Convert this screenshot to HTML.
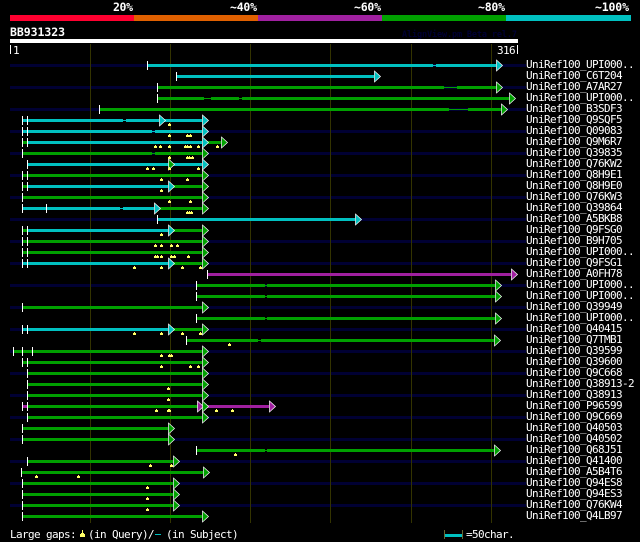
<!DOCTYPE html>
<html><head><meta charset="utf-8"><style>
html,body{margin:0;padding:0;background:#000;width:640px;height:542px;overflow:hidden}
svg{display:block}
text{font-family:"DejaVu Sans Mono","Liberation Mono",monospace;fill:#fff;white-space:pre}
.l text{font-size:11px;letter-spacing:-.62px}
.b text{font-size:11.5px;font-weight:bold}
</style></head><body>
<svg width="640" height="542" viewBox="0 0 640 542" xmlns="http://www.w3.org/2000/svg">
<rect x="10" y="15" width="124" height="6" fill="#ff0030"/>
<rect x="134" y="15" width="124" height="6" fill="#e06000"/>
<rect x="258" y="15" width="124" height="6" fill="#a020a0"/>
<rect x="382" y="15" width="124" height="6" fill="#00a000"/>
<rect x="506" y="15" width="125" height="6" fill="#00c0c0"/>
<rect x="10" y="39" width="508" height="4" fill="#fff"/>
<g class="b">
<text x="113" y="11" textLength="20">20%</text>
<text x="230" y="11" textLength="27">~40%</text>
<text x="354" y="11" textLength="27">~60%</text>
<text x="478" y="11" textLength="27">~80%</text>
<text x="595" y="11" textLength="34">~100%</text>
<text x="10" y="36" textLength="55">BB931323</text>
</g>
<text x="402" y="37" font-size="8.5" textLength="115" style="fill:#000033;font-weight:bold">AlignView.pm Beta rel.7</text>
<!-- navy alternate rows -->
<path stroke="#000033" stroke-width="3" fill="none" d="M10 65.5H526M10 87.5H526M10 109.5H526M10 131.5H526M10 153.5H526M10 175.5H526M10 197.5H526M10 219.5H526M10 241.5H526M10 263.5H526M10 285.5H526M10 307.5H526M10 329.5H526M10 351.5H526M10 373.5H526M10 395.5H526M10 417.5H526M10 439.5H526M10 461.5H526M10 483.5H526M10 505.5H526"/>
<!-- grid -->
<path stroke="#333300" stroke-width="1" fill="none" d="M90.5 44V523M170.5 44V523M250.5 44V523M330.5 44V523M411.5 44V523M491.5 44V523"/>
<!-- thin gap lines -->
<path stroke="#00c0c0" stroke-width="1" fill="none" d="M433 65.5H436M123 120.5H126M152 131.5H155M120 208.5H123"/>
<path stroke="#00a000" stroke-width="1" fill="none" d="M444 87.5H457M204 98.5H211M239 98.5H242M449 109.5H468M152 153.5H155M265 285.5H267M265 296.5H267M265 318.5H267M258 340.5H261M265 450.5H267"/>
<!-- green bars -->
<path stroke="#00a000" stroke-width="3" fill="none" d="M158 87.5H444M457 87.5H496M158 98.5H204M211 98.5H239M242 98.5H509M100 109.5H449M468 109.5H501M23 142.5H27M207 142.5H221M23 153.5H152M155 153.5H202M23 175.5H202M23 186.5H27M173 186.5H202M23 197.5H202M159 208.5H202M23 230.5H27M173 230.5H202M23 241.5H202M23 252.5H202M173 263.5H202M197 285.5H265M267 285.5H495M197 296.5H265M267 296.5H495M23 307.5H202M197 318.5H265M267 318.5H495M173 329.5H202M187 340.5H258M261 340.5H494M14 351.5H202M23 362.5H202M28 373.5H202M28 384.5H202M28 395.5H202M27 406.5H202M28 417.5H202M23 428.5H168M23 439.5H168M197 450.5H265M267 450.5H494M28 461.5H173M22 472.5H203M23 483.5H173M23 494.5H173M23 505.5H173M23 516.5H202"/>
<!-- cyan bars -->
<path stroke="#00c0c0" stroke-width="3" fill="none" d="M148 65.5H433M436 65.5H496M177 76.5H374M23 120.5H123M126 120.5H159M164 120.5H202M23 131.5H152M155 131.5H202M27 142.5H202M28 164.5H202M27 186.5H168M23 208.5H120M123 208.5H154M158 219.5H355M27 230.5H168M23 263.5H168M23 329.5H168"/>
<!-- purple bars -->
<path stroke="#a020a0" stroke-width="3" fill="none" d="M208 274.5H511M23 406.5H27M207 406.5H269"/>
<!-- ticks -->
<path stroke="#fff" stroke-width="1" fill="none" d="M10.5 45V54M517.5 45V54M147.5 61V70M176.5 72V81M157.5 83V92M157.5 94V103M99.5 105V114M22.5 116V125M27.5 116V125M22.5 127V136M27.5 127V136M22.5 138V147M27.5 138V147M22.5 149V158M27.5 160V169M22.5 171V180M27.5 171V180M22.5 182V191M27.5 182V191M22.5 193V202M22.5 204V213M46.5 204V213M157.5 215V224M22.5 226V235M27.5 226V235M22.5 237V246M27.5 237V246M22.5 248V257M27.5 248V257M22.5 259V268M27.5 259V268M207.5 270V279M196.5 281V290M196.5 292V301M22.5 303V312M196.5 314V323M22.5 325V334M27.5 325V334M186.5 336V345M13.5 347V356M22.5 347V356M32.5 347V356M22.5 358V367M27.5 358V367M27.5 369V378M27.5 380V389M27.5 391V400M22.5 402V411M27.5 402V411M27.5 413V422M22.5 424V433M22.5 435V444M196.5 446V455M27.5 457V466M21.5 468V477M22.5 479V488M22.5 490V499M22.5 501V510M22.5 512V521"/>
<!-- purple arrows (behind) -->
<path stroke="#fff" stroke-width=".7" fill="#a020a0" d="M511.5 269v11l6-5.5zM197.5 401v11l6-5.5zM269.5 401v11l6-5.5z"/>
<!-- green arrows -->
<path stroke="#fff" stroke-width=".7" fill="#00a000" d="M168.5 159v11l6-5.5zM496.5 82v11l6-5.5zM509.5 93v11l6-5.5zM501.5 104v11l6-5.5zM221.5 137v11l6-5.5zM202.5 148v11l6-5.5zM202.5 170v11l6-5.5zM202.5 181v11l6-5.5zM202.5 192v11l6-5.5zM202.5 203v11l6-5.5zM202.5 225v11l6-5.5zM202.5 236v11l6-5.5zM202.5 247v11l6-5.5zM202.5 258v11l6-5.5zM495.5 280v11l6-5.5zM495.5 291v11l6-5.5zM202.5 302v11l6-5.5zM495.5 313v11l6-5.5zM202.5 324v11l6-5.5zM494.5 335v11l6-5.5zM202.5 346v11l6-5.5zM202.5 357v11l6-5.5zM202.5 368v11l6-5.5zM202.5 379v11l6-5.5zM202.5 390v11l6-5.5zM202.5 401v11l6-5.5zM202.5 412v11l6-5.5zM168.5 423v11l6-5.5zM168.5 434v11l6-5.5zM494.5 445v11l6-5.5zM173.5 456v11l6-5.5zM203.5 467v11l6-5.5zM173.5 478v11l6-5.5zM173.5 489v11l6-5.5zM173.5 500v11l6-5.5zM202.5 511v11l6-5.5z"/>
<!-- cyan arrows -->
<path stroke="#fff" stroke-width=".7" fill="#00c0c0" d="M496.5 60v11l6-5.5zM374.5 71v11l6-5.5zM159.5 115v11l6-5.5zM202.5 115v11l6-5.5zM202.5 126v11l6-5.5zM202.5 137v11l6-5.5zM202.5 159v11l6-5.5zM168.5 181v11l6-5.5zM154.5 203v11l6-5.5zM355.5 214v11l6-5.5zM168.5 225v11l6-5.5zM168.5 258v11l6-5.5zM168.5 324v11l6-5.5z"/>
<!-- gap markers -->
<path fill="#ffff66" d="M169 123h1v1h1v2h-3v-2h1zM169 134h1v1h1v2h-3v-2h1zM187 134h1v1h1v2h-3v-2h1zM190 134h1v1h1v2h-3v-2h1zM155 145h1v1h1v2h-3v-2h1zM160 145h1v1h1v2h-3v-2h1zM169 145h1v1h1v2h-3v-2h1zM185 145h1v1h1v2h-3v-2h1zM187 145h1v1h1v2h-3v-2h1zM190 145h1v1h1v2h-3v-2h1zM198 145h1v1h1v2h-3v-2h1zM217 145h1v1h1v2h-3v-2h1zM169 156h1v1h1v2h-3v-2h1zM187 156h1v1h1v2h-3v-2h1zM189 156h1v1h1v2h-3v-2h1zM192 156h1v1h1v2h-3v-2h1zM147 167h1v1h1v2h-3v-2h1zM153 167h1v1h1v2h-3v-2h1zM169 167h1v1h1v2h-3v-2h1zM198 167h1v1h1v2h-3v-2h1zM161 178h1v1h1v2h-3v-2h1zM187 178h1v1h1v2h-3v-2h1zM161 189h1v1h1v2h-3v-2h1zM169 200h1v1h1v2h-3v-2h1zM190 200h1v1h1v2h-3v-2h1zM187 211h1v1h1v2h-3v-2h1zM189 211h1v1h1v2h-3v-2h1zM191 211h1v1h1v2h-3v-2h1zM161 233h1v1h1v2h-3v-2h1zM155 244h1v1h1v2h-3v-2h1zM161 244h1v1h1v2h-3v-2h1zM171 244h1v1h1v2h-3v-2h1zM177 244h1v1h1v2h-3v-2h1zM155 255h1v1h1v2h-3v-2h1zM157 255h1v1h1v2h-3v-2h1zM161 255h1v1h1v2h-3v-2h1zM171 255h1v1h1v2h-3v-2h1zM174 255h1v1h1v2h-3v-2h1zM188 255h1v1h1v2h-3v-2h1zM134 266h1v1h1v2h-3v-2h1zM161 266h1v1h1v2h-3v-2h1zM182 266h1v1h1v2h-3v-2h1zM200 266h1v1h1v2h-3v-2h1zM134 332h1v1h1v2h-3v-2h1zM161 332h1v1h1v2h-3v-2h1zM182 332h1v1h1v2h-3v-2h1zM200 332h1v1h1v2h-3v-2h1zM229 343h1v1h1v2h-3v-2h1zM161 354h1v1h1v2h-3v-2h1zM169 354h1v1h1v2h-3v-2h1zM171 354h1v1h1v2h-3v-2h1zM161 365h1v1h1v2h-3v-2h1zM190 365h1v1h1v2h-3v-2h1zM198 365h1v1h1v2h-3v-2h1zM168 387h1v1h1v2h-3v-2h1zM168 398h1v1h1v2h-3v-2h1zM156 409h1v1h1v2h-3v-2h1zM168 409h1v1h1v2h-3v-2h1zM169 409h1v1h1v2h-3v-2h1zM216 409h1v1h1v2h-3v-2h1zM232 409h1v1h1v2h-3v-2h1zM235 453h1v1h1v2h-3v-2h1zM150 464h1v1h1v2h-3v-2h1zM171 464h1v1h1v2h-3v-2h1zM36 475h1v1h1v2h-3v-2h1zM78 475h1v1h1v2h-3v-2h1zM147 486h1v1h1v2h-3v-2h1zM147 497h1v1h1v2h-3v-2h1zM147 508h1v1h1v2h-3v-2h1zM82 530h1v3h1v1h1v3h-5v-3h1v-1h1z"/>
<!-- labels -->
<g class="l">
<text x="13" y="54">1</text>
<text x="497" y="54">316</text>
<text x="526" y="68">UniRef100_UPI000..</text>
<text x="526" y="79">UniRef100_C6T204</text>
<text x="526" y="90">UniRef100_A7AR27</text>
<text x="526" y="101">UniRef100_UPI000..</text>
<text x="526" y="112">UniRef100_B3SDF3</text>
<text x="526" y="123">UniRef100_Q9SQF5</text>
<text x="526" y="134">UniRef100_Q09083</text>
<text x="526" y="145">UniRef100_Q9M6R7</text>
<text x="526" y="156">UniRef100_Q39835</text>
<text x="526" y="167">UniRef100_Q76KW2</text>
<text x="526" y="178">UniRef100_Q8H9E1</text>
<text x="526" y="189">UniRef100_Q8H9E0</text>
<text x="526" y="200">UniRef100_Q76KW3</text>
<text x="526" y="211">UniRef100_Q39864</text>
<text x="526" y="222">UniRef100_A5BKB8</text>
<text x="526" y="233">UniRef100_Q9FSG0</text>
<text x="526" y="244">UniRef100_B9H705</text>
<text x="526" y="255">UniRef100_UPI000..</text>
<text x="526" y="266">UniRef100_Q9FSG1</text>
<text x="526" y="277">UniRef100_A0FH78</text>
<text x="526" y="288">UniRef100_UPI000..</text>
<text x="526" y="299">UniRef100_UPI000..</text>
<text x="526" y="310">UniRef100_Q39949</text>
<text x="526" y="321">UniRef100_UPI000..</text>
<text x="526" y="332">UniRef100_Q40415</text>
<text x="526" y="343">UniRef100_Q7TMB1</text>
<text x="526" y="354">UniRef100_Q39599</text>
<text x="526" y="365">UniRef100_Q39600</text>
<text x="526" y="376">UniRef100_Q9C668</text>
<text x="526" y="387">UniRef100_Q38913-2</text>
<text x="526" y="398">UniRef100_Q38913</text>
<text x="526" y="409">UniRef100_P96599</text>
<text x="526" y="420">UniRef100_Q9C669</text>
<text x="526" y="431">UniRef100_Q40503</text>
<text x="526" y="442">UniRef100_Q40502</text>
<text x="526" y="453">UniRef100_Q68J51</text>
<text x="526" y="464">UniRef100_Q41400</text>
<text x="526" y="475">UniRef100_A5B4T6</text>
<text x="526" y="486">UniRef100_Q94ES8</text>
<text x="526" y="497">UniRef100_Q94ES3</text>
<text x="526" y="508">UniRef100_Q76KW4</text>
<text x="526" y="519">UniRef100_Q4LB97</text>
<text x="10" y="538">Large gaps:</text>
<text x="88" y="538">(in Query)/</text>
<text x="166" y="538">(in Subject)</text>
<text x="466" y="538">=50char.</text>
</g>
<!-- legend -->
<rect x="155" y="534" width="6" height="1" fill="#00c0c0"/>
<rect x="445" y="534" width="17" height="3" fill="#00c0c0"/>
<path stroke="#666633" stroke-width="1" fill="none" d="M444.5 530V539M462.5 530V539"/>
</svg>
</body></html>
